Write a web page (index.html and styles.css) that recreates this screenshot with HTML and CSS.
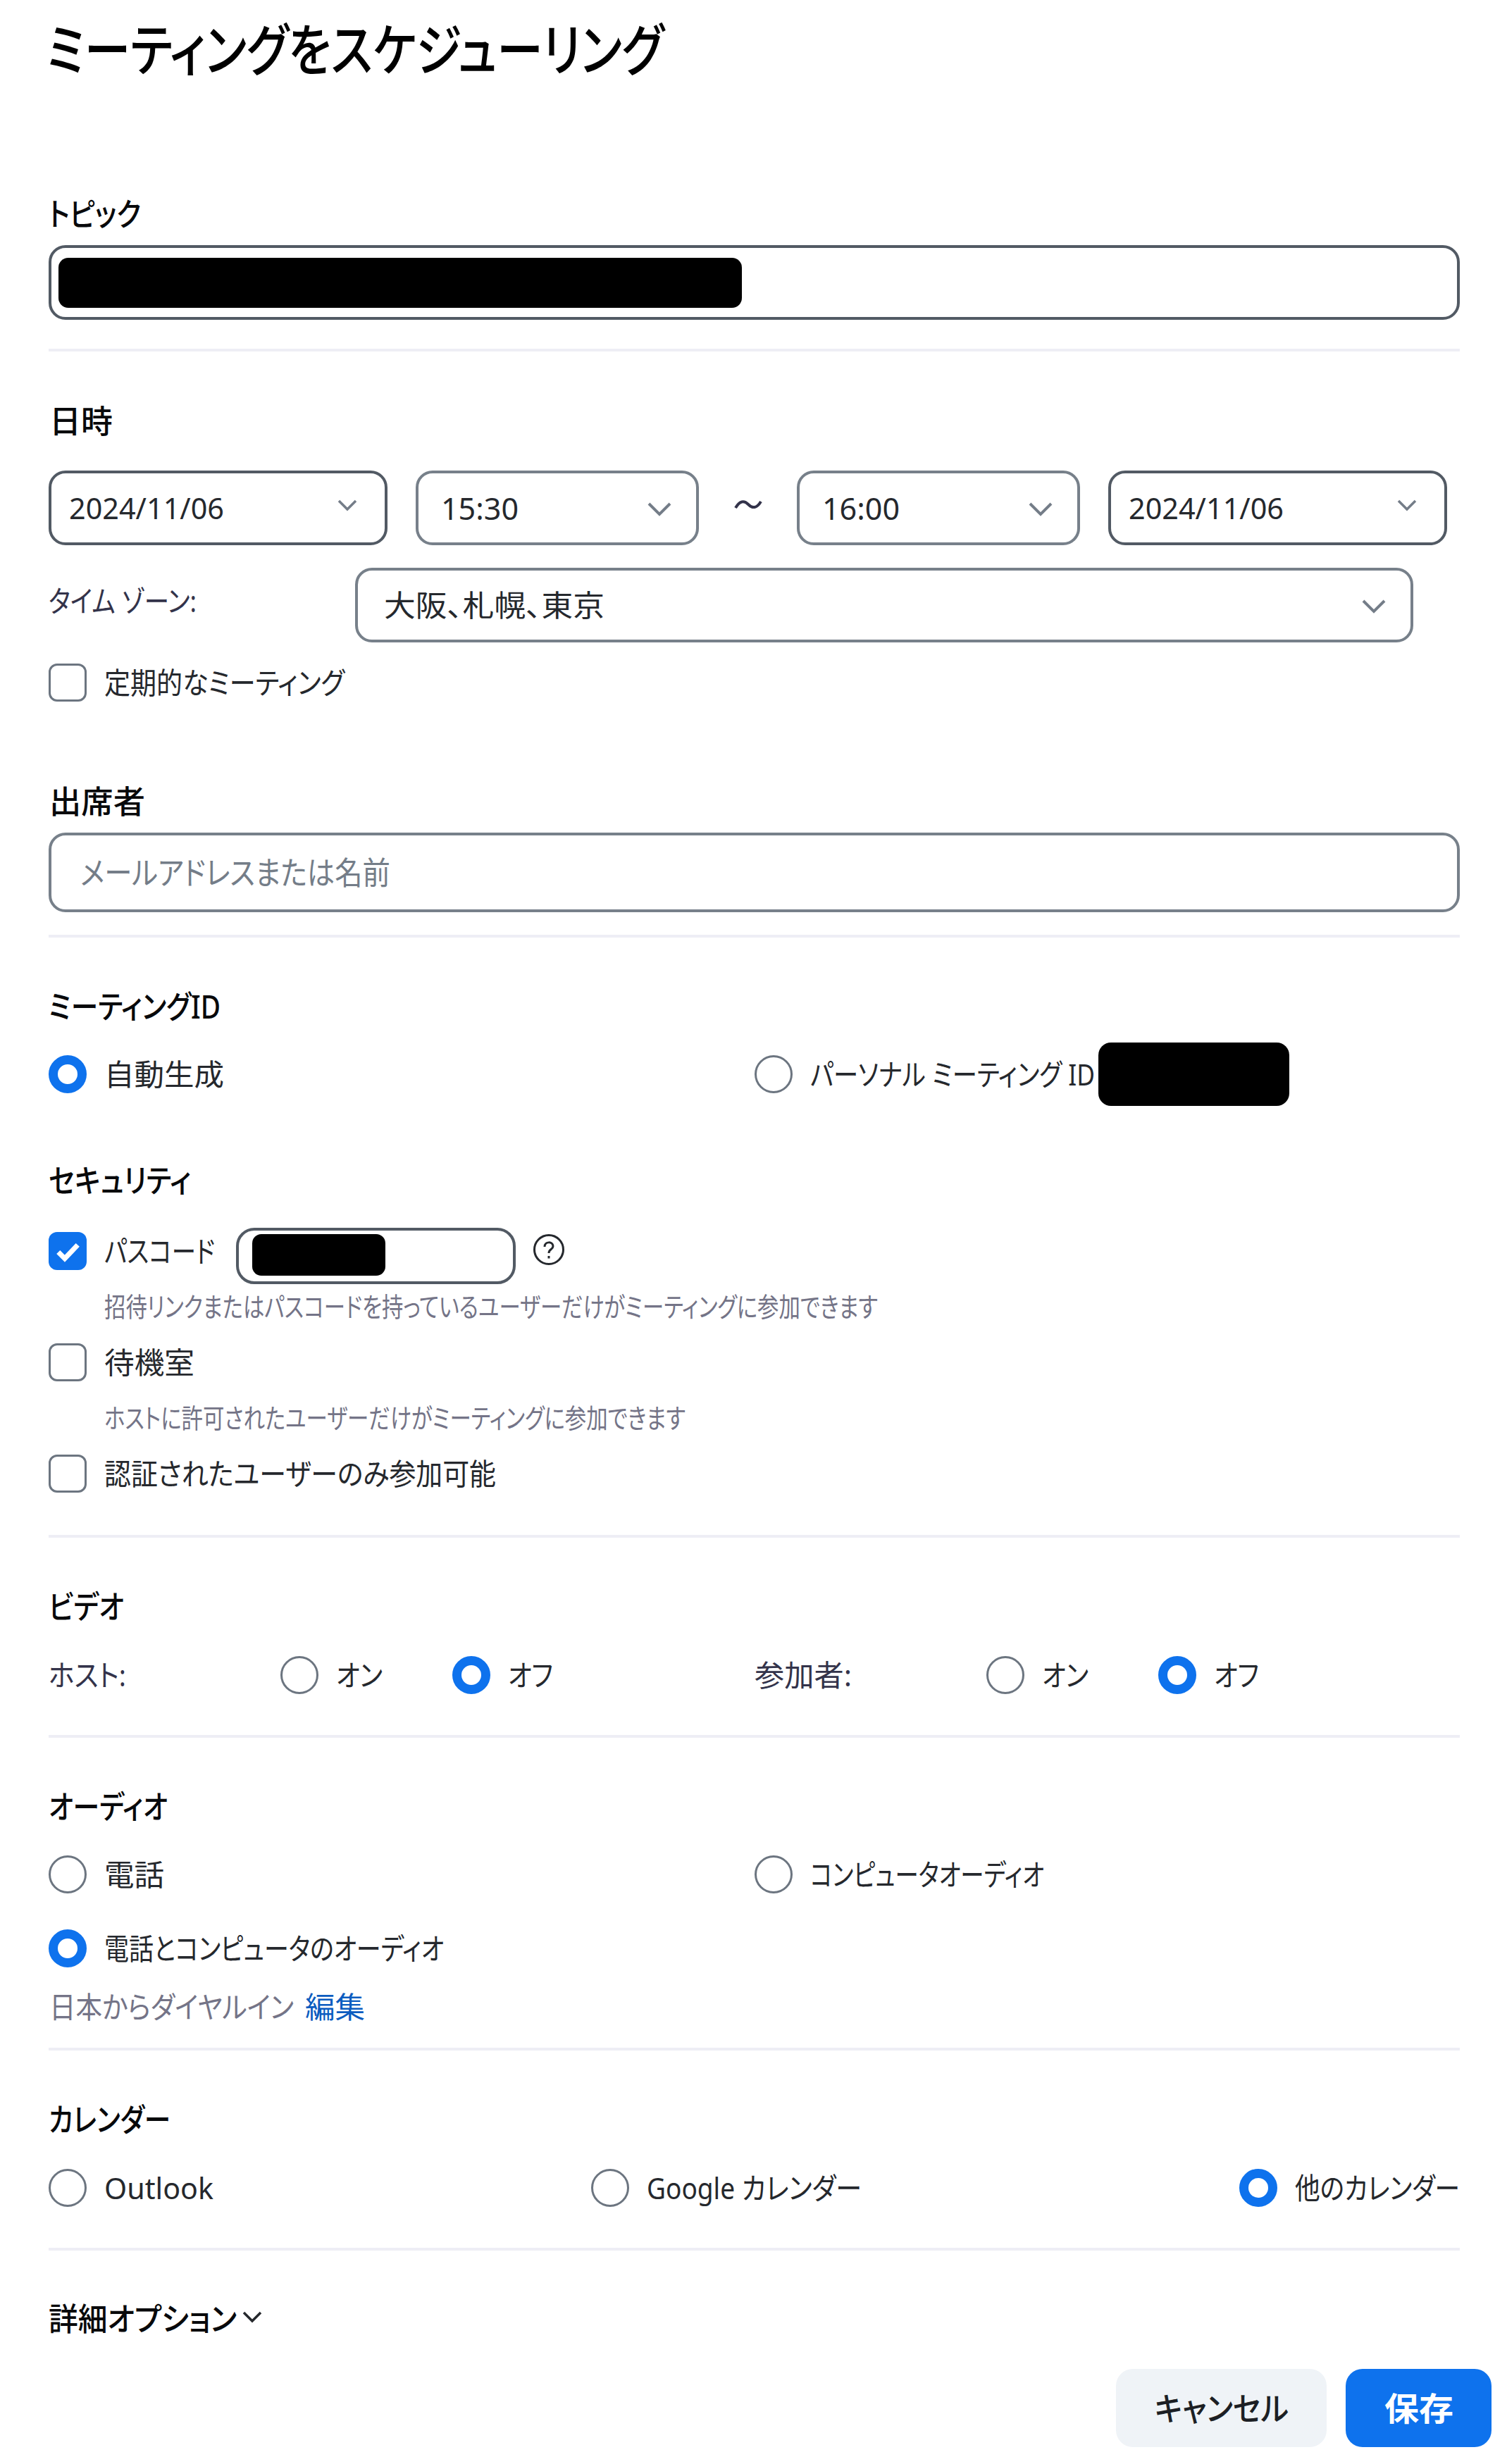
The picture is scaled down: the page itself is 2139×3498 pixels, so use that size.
FILE: index.html
```html
<!DOCTYPE html>
<html lang="ja">
<head>
<meta charset="utf-8">
<title>ミーティングをスケジューリング</title>
<link rel="stylesheet" href="styles.css">
</head>
<body>
<main class="page">
  <h1 class="title"><span class="fit" data-w="876">ミーティングをスケジューリング</span></h1>

  <section class="section topic">
    <h2 class="heading"><span class="fit" data-w="131">トピック</span></h2>
    <div class="field dark topic-input"><span class="mask mask-topic"></span></div>
  </section>

  <section class="section when">
    <h2 class="heading"><span class="fit" data-w="90">日時</span></h2>
    <div class="times">
      <div class="field dark date"><span class="fit" data-w="220">2024/11/06</span><svg class="chev small" viewBox="0 0 28 17"><path d="M2 2l12 12L26 2"/></svg></div>
      <div class="field time"><span class="fit" data-w="110">15:30</span><svg class="chev" viewBox="0 0 34 20"><path d="M2 2l15 15L32 2"/></svg></div>
      <svg class="tilde" viewBox="0 0 40 16"><path d="M2 12C8 2 14 1 20 7s12 6 18-4"/></svg>
      <div class="field time"><span class="fit" data-w="110">16:00</span><svg class="chev" viewBox="0 0 34 20"><path d="M2 2l15 15L32 2"/></svg></div>
      <div class="field dark date"><span class="fit" data-w="220">2024/11/06</span><svg class="chev small" viewBox="0 0 28 17"><path d="M2 2l12 12L26 2"/></svg></div>
    </div>
    <div class="zone">
      <span class="caption zone-label"><span class="fit" data-w="210">タイム ゾーン:</span></span>
      <div class="field zone-select"><span class="fit" data-w="313">大阪、札幌、東京</span><svg class="chev" viewBox="0 0 34 20"><path d="M2 2l15 15L32 2"/></svg></div>
    </div>
    <label class="option recurring"><span class="check"></span><span class="fit" data-w="341">定期的なミーティング</span></label>
  </section>

  <section class="section attendees">
    <h2 class="heading"><span class="fit" data-w="136">出席者</span></h2>
    <div class="field attendee-input"><span class="fit" data-w="440">メールアドレスまたは名前</span></div>
  </section>

  <section class="section meeting-id">
    <h2 class="heading"><span class="fit" data-w="244">ミーティングID</span></h2>
    <div class="columns id-row">
      <label class="option"><span class="radio on"></span><span class="fit" data-w="170">自動生成</span></label>
      <label class="option"><span class="radio"></span><span class="fit" data-w="404">パーソナル ミーティング ID</span><span class="mask mask-id"></span></label>
    </div>
  </section>

  <section class="section security">
    <h2 class="heading"><span class="fit" data-w="202">セキュリティ</span></h2>
    <div class="passcode">
      <label class="option pass-label"><span class="check on"><svg viewBox="0 0 52 53"><path d="M13 28l9 9 18-19"/></svg></span><span class="fit" data-w="157">パスコード</span></label>
      <div class="field dark pass-input"><span class="mask mask-pass"></span></div>
      <svg class="help" viewBox="0 0 46 46"><circle cx="23" cy="23" r="20.5"/><path d="M17 19c0-8 12-8 12-1 0 5-6 4-6 10"/><path d="M23 32v3.500"/></svg>
    </div>
    <p class="hint"><span class="fit" data-w="1098">招待リンクまたはパスコードを持っているユーザーだけがミーティングに参加できます</span></p>
    <label class="option"><span class="check"></span><span class="fit" data-w="128">待機室</span></label>
    <p class="hint lower"><span class="fit" data-w="825">ホストに許可されたユーザーだけがミーティングに参加できます</span></p>
    <label class="option"><span class="check"></span><span class="fit" data-w="556">認証されたユーザーのみ参加可能</span></label>
  </section>

  <section class="section video">
    <h2 class="heading"><span class="fit" data-w="107">ビデオ</span></h2>
    <div class="columns">
      <div class="switches"><span class="caption"><span class="fit" data-w="110">ホスト:</span></span>
        <label class="option"><span class="radio"></span><span class="fit" data-w="66">オン</span></label>
        <label class="option"><span class="radio on"></span><span class="fit" data-w="64">オフ</span></label></div>
      <div class="switches"><span class="caption"><span class="fit" data-w="138">参加者:</span></span>
        <label class="option"><span class="radio"></span><span class="fit" data-w="66">オン</span></label>
        <label class="option"><span class="radio on"></span><span class="fit" data-w="64">オフ</span></label></div>
    </div>
  </section>

  <section class="section audio">
    <h2 class="heading"><span class="fit" data-w="169">オーディオ</span></h2>
    <div class="columns">
      <label class="option"><span class="radio"></span><span class="fit" data-w="85">電話</span></label>
      <label class="option"><span class="radio"></span><span class="fit" data-w="332">コンピュータオーディオ</span></label>
      <label class="option"><span class="radio on"></span><span class="fit" data-w="482">電話とコンピュータのオーディオ</span></label>
    </div>
    <p class="dial"><span class="fit" data-w="347">日本からダイヤルイン</span><a class="fit link" data-w="85">編集</a></p>
  </section>

  <section class="section calendar">
    <h2 class="heading"><span class="fit" data-w="173">カレンダー</span></h2>
    <div class="calendars">
      <label class="option"><span class="radio"></span><span class="fit" data-w="155">Outlook</span></label>
      <label class="option"><span class="radio"></span><span class="fit" data-w="305">Google カレンダー</span></label>
      <label class="option"><span class="radio on"></span><span class="fit" data-w="234">他のカレンダー</span></label>
    </div>
  </section>

  <section class="section more">
    <h2 class="heading more-toggle"><span class="fit" data-w="267">詳細オプション</span><svg class="chev small" viewBox="0 0 28 17"><path d="M2 2l12 12L26 2"/></svg></h2>
  </section>

  <footer class="actions">
    <button class="btn cancel"><span class="fit" data-w="190">キャンセル</span></button>
    <button class="btn save"><span class="fit" data-w="98">保存</span></button>
  </footer>
</main>
<script src="fit.js"></script>
</body>
</html>
```
FILE: styles.css
```css
* { box-sizing: border-box; }
body {
  margin: 0;
  background: #fff;
  color: #25282d;
  font-family: "Noto Sans", "Noto Sans CJK JP", sans-serif;
  font-size: 42px;
  line-height: 60px;
  font-feature-settings: "palt";
}
h1, h2, p { margin: 0; }
.page { width: 2139px; height: 3498px; padding: 18px 67px 0 69px; overflow: hidden; }
.fit { display: inline-block; white-space: nowrap; transform-origin: 0 50%; flex: none; }
.title { height: 100px; line-height: 102px; margin-left: -3px; font-size: 80px; font-weight: 500; color: #000; }
.heading { height: 60px; font-size: 45px; font-weight: 500; color: #08090b; }
.caption { color: #33334a; }

.section::after { content: ""; display: block; height: 4px; background: #eeeef5; }
.field { height: 106px; border: 4px solid #77808a; border-radius: 24px; display: flex; align-items: center; }
.field.dark { border-color: #525a64; }
.mask { background: #000; flex: none; }
.chev { width: 34px; height: 20px; fill: none; stroke: #747d88; stroke-width: 4; }
.chev.small { width: 28px; height: 17px; stroke-width: 3.500; }

.option { display: flex; align-items: center; gap: 25px; height: 54px; }
.radio { width: 54px; height: 54px; border: 3px solid #6c7580; border-radius: 50%; flex: none; }
.radio.on { border: 13px solid #0e72ed; }
.check { width: 54px; height: 54px; border: 3px solid #6c7580; border-radius: 12px; flex: none; }
.check.on { background: #0e72ed; border: 0; }
.check svg { display: block; width: 54px; height: 54px; fill: none; stroke: #fff; stroke-width: 7; }
.columns { display: grid; grid-template-columns: 1002px 1001px; row-gap: 51px; }

.topic { margin-top: 156px; }
.topic-input { margin: 14px 0 41px; padding-left: 10px; }
.mask-topic { width: 970px; height: 71px; border-radius: 14px; }

.when { margin-top: 69px; }
.when::after { display: none; }
.when .heading, .attendees .heading { padding-left: 1px; }
.times { display: flex; align-items: center; margin-top: 40px; }
.date { width: 481px; padding: 0 39px 0 25px; }
.date .chev, .time .chev, .zone-select .chev { margin-left: auto; }
.date .chev { margin-top: -8px; }
.time { width: 402px; margin-left: 40px; padding: 0 35px 0 32px; font-size: 44px; }
.time .chev, .zone-select .chev { margin-top: 3px; }
.time + .date { margin-left: 40px; }
.tilde { width: 40px; height: 16px; margin: -8px 9px 0 50px; fill: none; stroke: #33334a; stroke-width: 4; }
.zone { display: flex; align-items: center; margin-top: 32px; }
.zone-label { width: 435px; margin-top: -12px; }
.zone-select { width: 1502px; padding: 0 35px 0 37px; }
.recurring { margin-top: 30px; }

.attendees { margin-top: 112px; }
.attendee-input { height: 113px; margin: 14px 0 32px; padding-left: 41px; font-size: 45px; color: #747d88; }

.meeting-id { margin-top: 68px; }
.meeting-id::after { display: none; }
.id-row { height: 90px; margin-top: 21px; align-items: center; }
.mask-id { width: 271px; height: 90px; border-radius: 18px; margin-left: -20px; }

.security { margin-top: 76px; }
.security::after { margin-top: 60px; }
.passcode { display: flex; align-items: center; height: 80px; margin-top: 37px; }
.pass-label { width: 266px; margin-top: -14px; }
.pass-input { width: 397px; height: 80px; border-radius: 26px; padding-left: 19px; }
.mask-pass { width: 189px; height: 59px; border-radius: 13px; margin-top: -3px; }
.help { width: 46px; height: 46px; margin: -18px 0 0 24px; fill: none; stroke: #25282d; stroke-width: 3; }
.hint { height: 50px; line-height: 48px; margin: 7px 0 27px; padding-left: 79px; font-size: 38px; color: #747487; }
.hint.lower { margin-top: 27px; }

.video { margin-top: 68px; }
.video .columns { margin: 40px 0 58px; }
.switches { display: flex; align-items: center; height: 54px; }
.switches .caption { width: 329px; }
.switches .option { width: 244px; }

.audio { margin-top: 68px; }
.audio .columns { margin-top: 39px; }
.dial { display: flex; gap: 16px; height: 50px; line-height: 50px; margin: 31px 0 33px; padding-left: 1px; color: #747487; }
.link { color: #0b5cc0; }

.calendar { margin-top: 68px; }
.calendars { display: flex; justify-content: space-between; margin: 40px 0 58px; }

.more { margin-top: 67px; }
.more::after { display: none; }
.more-toggle { display: flex; align-items: center; gap: 8px; }
.more-toggle .chev { stroke: #25282d; margin-top: -6px; }

.actions { display: flex; justify-content: flex-end; gap: 27px; margin: 41px -45px 0 0; }
.btn { display: flex; align-items: center; justify-content: center; height: 111px; padding: 0 0 2px; border: 0; border-radius: 24px; font: inherit; font-size: 46px; font-feature-settings: "palt"; }
.cancel { width: 299px; background: #eff3f7; color: #1c1f24; font-weight: 500; }
.save { width: 207px; background: #0e72ed; color: #fff; font-weight: 700; }
```
FILE: fit.js
```js
document.querySelectorAll('.fit').forEach(function (el) {
  var natural = el.getBoundingClientRect().width;
  var target = Number(el.dataset.w);
  el.style.transform = 'scaleX(' + target / natural + ')';
  el.style.marginRight = (target - natural) + 'px';
});
```
